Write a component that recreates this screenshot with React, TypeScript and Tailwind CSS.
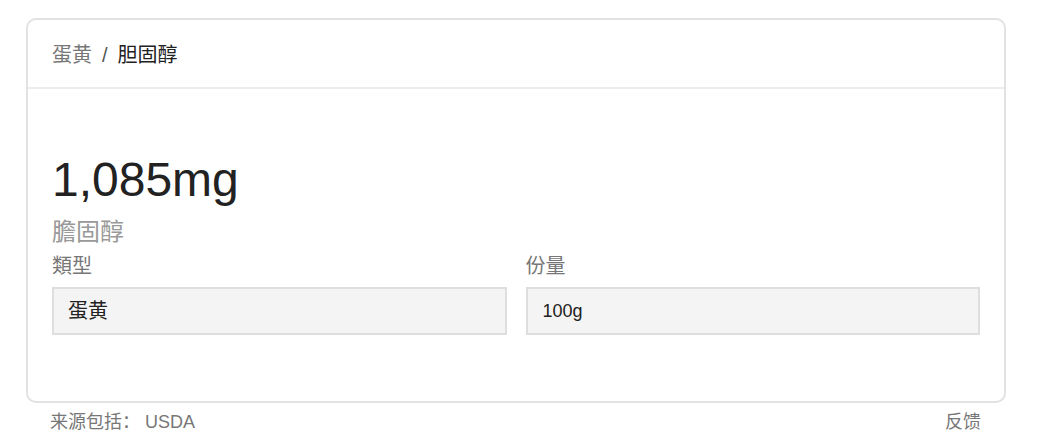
import React from "react";

export default function App() {
  return (
    <div
      className="w-[1044px] h-[446px] bg-white pt-[18px] pl-[26px]"
      style={{ fontFamily: '"Liberation Sans", Arial, "Noto Sans CJK SC", sans-serif' }}
    >
      <div className="w-[980px] h-[385px] border-2 border-[#e2e2e2] rounded-[10px] bg-white">
        <div className="h-[69px] border-b-2 border-[#ececec] flex items-center pl-[24px] pt-[2px] text-[20px]">
          <span className="text-[#777]">蛋黄</span>
          <span className="text-[#555] mx-[10px]">/</span>
          <span className="text-[#222]">胆固醇</span>
        </div>
        <div className="px-[24px] pt-[63px]">
          <div className="text-[48px] leading-[56px] text-[#222]">1,085mg</div>
          <div className="text-[24px] leading-[32px] text-[#999] mt-[8px]">膽固醇</div>
          <div className="grid grid-cols-2 gap-x-[19px] mt-[4px]">
            <div className="flex flex-col">
              <div className="text-[20px] leading-[28px] text-[#777]">類型</div>
              <div className="mt-[7px] h-[48px] border-2 border-[#dedede] bg-[#f4f4f4] flex items-center pl-[14px] text-[20px] text-[#222]">
                蛋黄
              </div>
            </div>
            <div className="flex flex-col">
              <div className="text-[20px] leading-[28px] text-[#777]">份量</div>
              <div className="mt-[7px] h-[48px] border-2 border-[#dedede] bg-[#f4f4f4] flex items-center pl-[15px] text-[18px] text-[#222]">
                100g
              </div>
            </div>
          </div>
        </div>
      </div>
      <div className="w-[980px] flex justify-between pl-[24px] pr-[25px] mt-[5px] text-[18px] leading-[28px] text-[#777]">
        <span>来源包括： USDA</span>
        <span>反馈</span>
      </div>
    </div>
  );
}
